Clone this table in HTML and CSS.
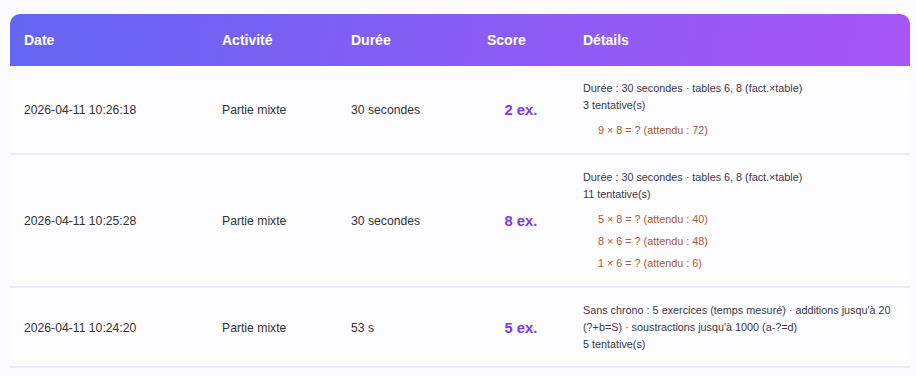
FILE: index.html
```html
<!DOCTYPE html>
<html lang="fr">
<head>
<meta charset="utf-8">
<title>Historique</title>
<link rel="stylesheet" href="styles.css">
</head>
<body>
<div class="wrap">
<table class="history">
  <thead>
    <tr>
      <th class="c-date">Date</th>
      <th class="c-act">Activité</th>
      <th class="c-dur">Durée</th>
      <th class="c-score">Score</th>
      <th class="c-det">Détails</th>
    </tr>
  </thead>
  <tbody>
    <tr>
      <td>2026-04-11 10:26:18</td>
      <td>Partie mixte</td>
      <td>30 secondes</td>
      <td class="score">2 ex.</td>
      <td class="details">
        <div>Durée : 30 secondes · tables 6, 8 (fact.×table)</div>
        <div>3 tentative(s)</div>
        <ul class="errors">
          <li>9 × 8 = ? (attendu : 72)</li>
        </ul>
      </td>
    </tr>
    <tr>
      <td>2026-04-11 10:25:28</td>
      <td>Partie mixte</td>
      <td>30 secondes</td>
      <td class="score">8 ex.</td>
      <td class="details">
        <div>Durée : 30 secondes · tables 6, 8 (fact.×table)</div>
        <div>11 tentative(s)</div>
        <ul class="errors">
          <li>5 × 8 = ? (attendu : 40)</li>
          <li>8 × 6 = ? (attendu : 48)</li>
          <li>1 × 6 = ? (attendu : 6)</li>
        </ul>
      </td>
    </tr>
    <tr>
      <td>2026-04-11 10:24:20</td>
      <td>Partie mixte</td>
      <td>53 s</td>
      <td class="score">5 ex.</td>
      <td class="details">
        <div>Sans chrono : 5 exercices (temps mesuré) · additions jusqu'à 20 (?+b=S) · soustractions jusqu'à 1000 (a-?=d)</div>
        <div>5 tentative(s)</div>
      </td>
    </tr>
  </tbody>
</table>
</div>
</body>
</html>
```
FILE: styles.css
```css
html, body {
  margin: 0;
  padding: 0;
  background: #fcfbff;
  font-family: "Liberation Sans", Arial, sans-serif;
}
.wrap {
  padding: 14px 6px 0 10px;
}
.history {
  width: 900px;
  border-collapse: collapse;
  table-layout: fixed;
}
.history thead tr {
  background: linear-gradient(100deg, #6366f1 0%, #8b5cf6 55%, #a855f7 100%);
}
.history th {
  background: transparent;
  color: #fff;
  font-size: 14px;
  font-weight: bold;
  text-align: left;
  height: 52px;
  padding: 0 14px;
  box-sizing: border-box;
}
.history thead th:first-child { border-top-left-radius: 10px; }
.history thead th:last-child { border-top-right-radius: 10px; }
.c-date { width: 198px; }
.c-act { width: 129px; }
.c-dur { width: 136px; }
.c-score { width: 96px; }
.c-det { width: 341px; }
.history td {
  padding: 14px 14px 13px;
  font-size: 12.2px;
  color: #333;
  vertical-align: middle;
  border-bottom: 2px solid #f1eafe;
  background: #fdfcff;
}
.history td.score {
  text-align: center;
  font-size: 14.8px;
  font-weight: bold;
  color: #7c3aed;
}
.history td.details {
  font-size: 10.8px;
  line-height: 17px;
  color: #3a3a48;
}
.errors {
  list-style: none;
  margin: 4px 0 0 0;
  padding: 0 0 0 15px;
}
.errors li {
  color: #a85a2e;
  padding: 4px 0 1px;
}
```
